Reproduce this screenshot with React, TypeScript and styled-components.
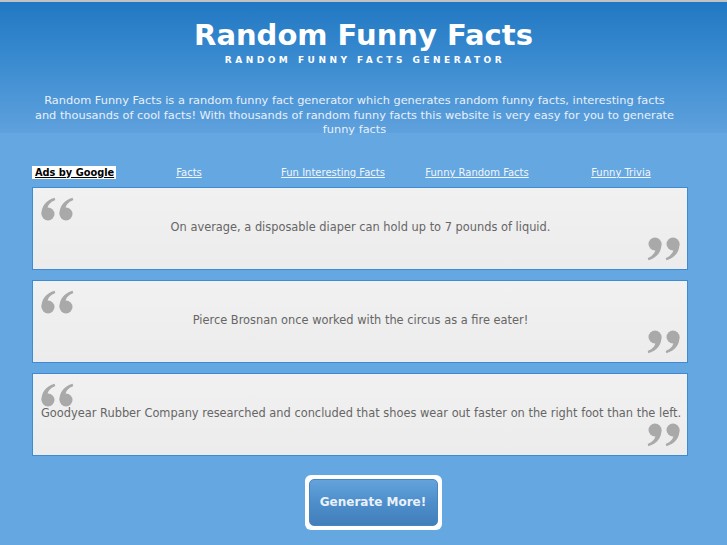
import React from "react";
import styled, { createGlobalStyle } from "styled-components";

const Global = createGlobalStyle`
  html, body { margin: 0; padding: 0; }
  body {
    background: #65a7e0;
    font-family: "DejaVu Sans", Verdana, sans-serif;
    min-height: 545px;
    border-top: 2px solid #c2c2c2;
  }
`;

const Header = styled.header`
  height: 131px;
  background: linear-gradient(to bottom, #2178c2 0%, #3a8bd0 45%, #5fa1dd 100%);
  display: flex;
  flex-direction: column;
  align-items: center;
  padding-top: 16px;
  box-sizing: border-box;
`;

const Title = styled.h1`
  margin: 0;
  font-family: "DejaVu Sans", sans-serif;
  font-weight: bold;
  font-size: 29px;
  line-height: 34px;
  color: #ffffff;
`;

const Subtitle = styled.div`
  font-family: "DejaVu Sans", sans-serif;
  font-weight: bold;
  font-size: 9px;
  letter-spacing: 3.5px;
  line-height: 12px;
  color: #ffffff;
  margin-top: 2px;
  padding-left: 3px;
`;

const Intro = styled.p`
  margin: 27px 18px 0 0;
  width: 643px;
  text-align: center;
  font-family: "DejaVu Sans", sans-serif;
  font-size: 11.35px;
  line-height: 14.5px;
  color: #e8f0fa;
`;

const Main = styled.main`
  width: 656px;
  margin-left: 32px;
  padding-top: 32px;
`;

const Nav = styled.nav`
  display: grid;
  grid-template-columns: 85px repeat(4, 144px);
  align-items: center;
  height: 14px;
  margin-bottom: 8px;
`;

const AdsLabel = styled.a`
  justify-self: start;
  white-space: nowrap;
  background: #ffffff;
  color: #000000;
  font-family: "DejaVu Sans", sans-serif;
  font-weight: bold;
  font-size: 9.8px;
  line-height: 13px;
  padding: 0 2px 0 3px;
  text-decoration: underline;
`;

const NavLink = styled.a`
  justify-self: center;
  white-space: nowrap;
  color: #f2f6fc;
  font-family: "DejaVu Sans", sans-serif;
  font-size: 10px;
  line-height: 13px;
  text-decoration: underline;
`;

const FactList = styled.div`
  display: flex;
  flex-direction: column;
  gap: 10px;
`;

const FactBox = styled.div`
  border: 1px solid #3d8bd3;
  background: linear-gradient(to bottom, #f1f1f1 0%, #ececec 100%);
  padding: 9px 7px 8px 8px;
  display: flex;
  flex-direction: column;
  height: 83px;
  box-sizing: border-box;
`;

const FactText = styled.p`
  margin: -2px 0 0;
  height: 16px;
  line-height: 16px;
  text-align: center;
  font-family: "DejaVu Sans", sans-serif;
  font-size: 11.4px;
  color: #666666;
  white-space: nowrap;
`;

const QuoteSvg = styled.svg<{ $close?: boolean }>`
  display: block;
  width: 33px;
  height: 24px;
  flex: none;
  align-self: ${(p) => (p.$close ? "flex-end" : "flex-start")};
  margin-top: ${(p) => (p.$close ? "2px" : "0")};
`;

const ButtonRow = styled.div`
  display: flex;
  justify-content: center;
  padding-top: 19px;
  padding-left: 26px;
`;

const ButtonFrame = styled.div`
  background: #ffffff;
  border-radius: 6px;
  padding: 4px;
  display: flex;
`;

const GenerateButton = styled.button`
  width: 129px;
  height: 47px;
  border-radius: 5px;
  border: 1px solid #4a86be;
  background: linear-gradient(to bottom, #64a3dc 0%, #4d8ecb 50%, #427fba 100%);
  color: #e9f1fa;
  font-family: "DejaVu Sans", sans-serif;
  font-weight: bold;
  font-size: 12px;
  padding: 0 0 2px;
  cursor: pointer;
`;

const Mark = () => (
  <g>
    <circle cx="7" cy="17" r="6.5" />
    <path d="M0.6 17.5 C0.2 9.5 5 3.2 13.6 0.8 L14.3 3 C9 5.2 6.4 8.6 6.6 12 Z" />
  </g>
);

const Quote = ({ close }: { close?: boolean }) => (
  <QuoteSvg $close={close} viewBox="0 0 33 24" fill="#a9a9a9">
    <g transform={close ? "rotate(180 16.5 12)" : undefined}>
      <Mark />
      <g transform="translate(18 0)">
        <Mark />
      </g>
    </g>
  </QuoteSvg>
);

const facts = [
  "On average, a disposable diaper can hold up to 7 pounds of liquid.",
  "Pierce Brosnan once worked with the circus as a fire eater!",
  "Goodyear Rubber Company researched and concluded that shoes wear out faster on the right foot than the left.",
];

const links = ["Facts", "Fun Interesting Facts", "Funny Random Facts", "Funny Trivia"];

export default function App() {
  return (
    <>
      <Global />
      <Header>
        <Title>Random Funny Facts</Title>
        <Subtitle>RANDOM FUNNY FACTS GENERATOR</Subtitle>
        <Intro>
          Random Funny Facts is a random funny fact generator which generates random funny facts, interesting facts
          and thousands of cool facts! With thousands of random funny facts this website is very easy for you to generate
          funny facts
        </Intro>
      </Header>
      <Main>
        <Nav>
          <AdsLabel href="#">Ads by Google</AdsLabel>
          {links.map((l) => (
            <NavLink key={l} href="#">
              {l}
            </NavLink>
          ))}
        </Nav>
        <FactList>
          {facts.map((f) => (
            <FactBox key={f}>
              <Quote />
              <FactText>{f}</FactText>
              <Quote close />
            </FactBox>
          ))}
        </FactList>
        <ButtonRow>
          <ButtonFrame>
            <GenerateButton>Generate More!</GenerateButton>
          </ButtonFrame>
        </ButtonRow>
      </Main>
    </>
  );
}
